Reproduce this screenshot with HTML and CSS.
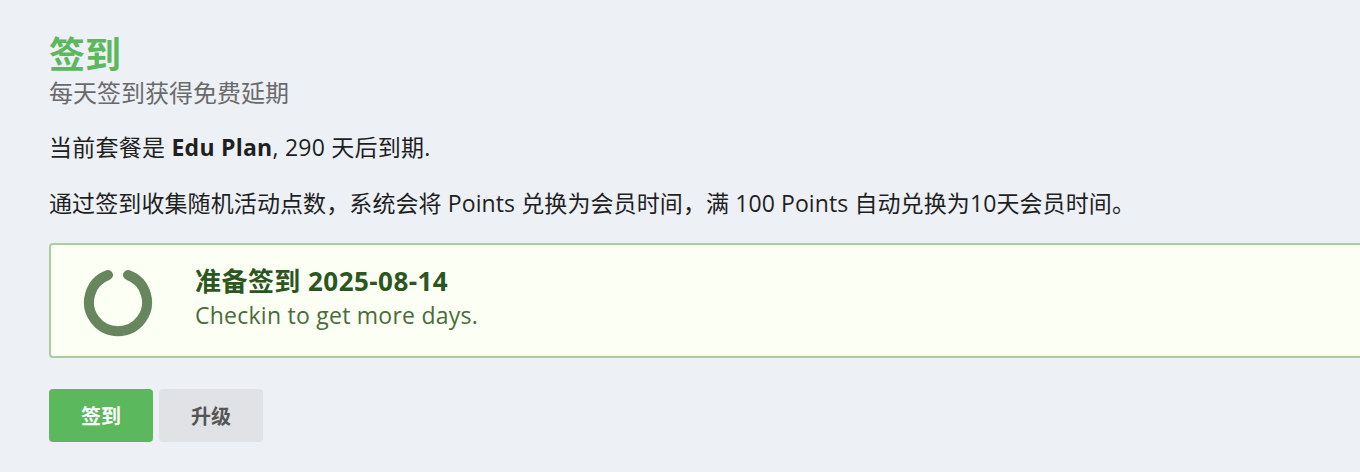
FILE: index.html
```html
<!DOCTYPE html>
<html lang="zh">
<head>
<meta charset="utf-8">
<title>签到</title>
<link rel="stylesheet" href="styles.css">
</head>
<body>
<main class="page">
  <header class="head">
    <h1 class="title">签到</h1>
    <p class="subtitle">每天签到获得免费延期</p>
  </header>
  <p class="plan">当前套餐是 <b>Edu Plan</b>, 290 天后到期.</p>
  <p class="desc">通过签到收集随机活动点数，系统会将 Points 兑换为会员时间，满 100 Points 自动兑换为10天会员时间。</p>
  <section class="card">
    <div class="ring">
      <svg width="70" height="70" viewBox="0 0 70 70">
        <path d="M25 8 A29 29 0 1 0 45 8" fill="none" stroke="#66875d" stroke-width="10" stroke-linecap="round"/>
      </svg>
    </div>
    <div class="card-text">
      <div class="card-title">准备签到 2025-08-14</div>
      <div class="card-sub">Checkin to get more days.</div>
    </div>
  </section>
  <div class="actions">
    <button class="btn btn-primary">签到</button>
    <button class="btn btn-muted">升级</button>
  </div>
</main>
</body>
</html>
```
FILE: styles.css
```css
html, body {
  margin: 0;
  padding: 0;
  background: #edf0f5;
  overflow: hidden;
}
body {
  font-family: "Open Sans", "Noto Sans CJK SC", sans-serif;
  font-size: 23px;
  color: #1f1f1f;
}
.page {
  padding: 34px 0 0 49px;
  width: 1360px;
}
.title {
  margin: 0;
  font-size: 36px;
  line-height: 42px;
  font-weight: 700;
  color: #5cb85c;
}
.subtitle {
  margin: 2px 0 0;
  font-size: 24px;
  line-height: 30px;
  color: #6a6a6a;
}
.plan {
  margin: 22px 0 0;
  line-height: 34px;
  letter-spacing: 0.25px;
}
.plan b { font-weight: 700; }
.desc {
  margin: 22px 0 0;
  line-height: 34px;
  letter-spacing: 0.1px;
}
.card {
  margin-top: 23px;
  width: 1400px;
  height: 115px;
  box-sizing: border-box;
  border: 2px solid #adcba0;
  border-radius: 4px;
  background: #fcfff4;
  display: flex;
  align-items: center;
  padding-left: 32px;
  gap: 42px;
}
.ring { width: 70px; height: 70px; padding-top: 2px; }
.ring svg { display: block; }
.card-text { padding-bottom: 6px; }
.card-title {
  font-size: 26px;
  font-weight: 700;
  color: #2b561f;
  line-height: 34px;
  letter-spacing: 0.45px;
}
.card-sub {
  font-size: 23px;
  color: #4a6b3d;
  line-height: 34px;
  letter-spacing: 0.25px;
}
.actions {
  margin-top: 31px;
  display: flex;
  gap: 6px;
}
.btn {
  width: 104px;
  height: 53px;
  border: none;
  border-radius: 4px;
  font-family: "Noto Sans CJK SC", sans-serif;
  font-size: 20px;
  font-weight: 700;
}
.btn-primary { background: #5cb85c; color: #fff; }
.btn-muted { background: #e1e2e5; color: #555; }
```
